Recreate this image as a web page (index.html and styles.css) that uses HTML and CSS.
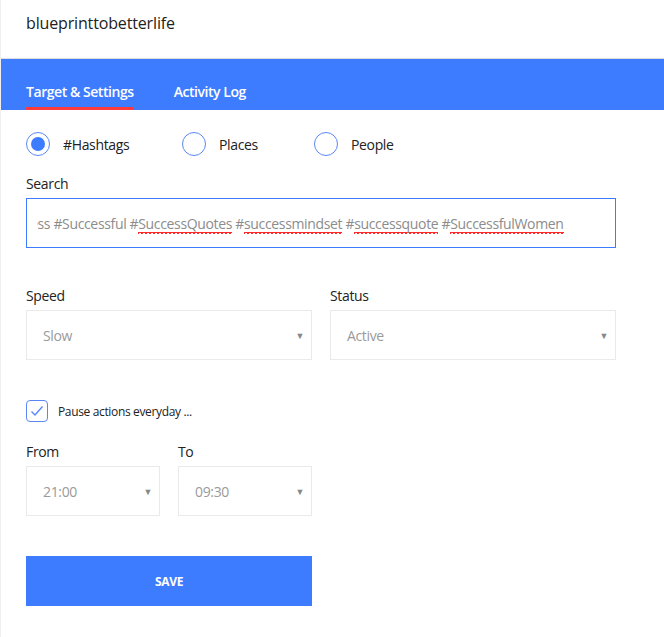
FILE: index.html
```html
<!DOCTYPE html>
<html lang="en">
<head>
    <meta charset="UTF-8">
    <meta name="viewport" content="width=device-width, initial-scale=1.0">
    <title>Target & Settings</title>
    <link rel="stylesheet" href="styles.css">
</head>
<body>
<div class="page">
    <header class="account-header">blueprinttobetterlife</header>

    <nav class="tabs">
        <span class="tab active">Target &amp; Settings</span>
        <span class="tab">Activity Log</span>
    </nav>

    <div class="settings">
        <div class="radio-row">
            <label class="radio checked"><span class="radio-dot"></span>#Hashtags</label>
            <label class="radio"><span class="radio-dot"></span>Places</label>
            <label class="radio"><span class="radio-dot"></span>People</label>
        </div>

        <div class="field">
            <div class="field-label">Search</div>
            <div class="search-box">
                <div class="search-clip">
                    <span class="search-text">#success #Successful #<span class="typo">SuccessQuotes</span> #<span class="typo">successmindset</span> #<span class="typo">successquote</span> #<span class="typo">SuccessfulWomen</span></span>
                </div>
            </div>
        </div>

        <div class="field-row">
            <div class="field wide">
                <div class="field-label">Speed</div>
                <div class="select"><span>Slow</span><span class="arrow">&#9660;</span></div>
            </div>
            <div class="field wide">
                <div class="field-label">Status</div>
                <div class="select"><span>Active</span><span class="arrow">&#9660;</span></div>
            </div>
        </div>

        <label class="checkbox">
            <span class="check-box">
                <svg width="14" height="12" viewBox="0 0 14 12">
                    <polyline points="1.5,6.5 5,10 12.5,1.5" fill="none" stroke="#5b87f5" stroke-width="1.4"/>
                </svg>
            </span>
            Pause actions everyday ...
        </label>

        <div class="field-row time-row">
            <div class="field narrow">
                <div class="field-label">From</div>
                <div class="select"><span>21:00</span><span class="arrow">&#9660;</span></div>
            </div>
            <div class="field narrow">
                <div class="field-label">To</div>
                <div class="select"><span>09:30</span><span class="arrow">&#9660;</span></div>
            </div>
        </div>

        <button type="button" class="save-button">SAVE</button>
    </div>
</div>
</body>
</html>
```

FILE: styles.css
```css
body {
    margin: 0;
    background-color: #ffffff;
    color: #222222;
    font-family: "Open Sans", sans-serif;
    letter-spacing: -0.35px;
}

.page {
    border-left: 1px solid #eeeeee;
    min-height: 637px;
    box-sizing: border-box;
}

.account-header {
    height: 59px;
    padding: 12px 25px 0;
    box-sizing: border-box;
    font-size: 16px;
    letter-spacing: -0.15px;
    border-bottom: 1px solid #dddddd;
}

.tabs {
    background-color: #3d7cff;
    height: 51px;
    padding: 0 25px;
    display: flex;
    gap: 40px;
    align-items: flex-end;
}

.tab {
    color: #ffffff;
    font-size: 14px;
    font-weight: 600;
    letter-spacing: -0.45px;
    padding-bottom: 6px;
    border-bottom: 3px solid transparent;
}

.tab.active {
    border-bottom-color: #ff3b3b;
}

.settings {
    padding: 0 25px;
    width: 590px;
}

.radio-row {
    display: flex;
    height: 24px;
    margin-top: 22px;
    align-items: center;
}

.radio {
    display: flex;
    align-items: center;
    gap: 13px;
    font-size: 14px;
}

.radio:nth-child(1) {
    width: 156px;
}

.radio:nth-child(2) {
    width: 132px;
}

.radio-dot {
    width: 24px;
    height: 24px;
    box-sizing: border-box;
    border: 1px solid #5b87f5;
    border-radius: 50%;
    display: flex;
    align-items: center;
    justify-content: center;
}

.radio.checked .radio-dot::after {
    content: "";
    width: 14px;
    height: 14px;
    border-radius: 50%;
    background-color: #3d7cff;
}

.field {
    display: flex;
    flex-direction: column;
}

.field-label {
    font-size: 14px;
    height: 21px;
    line-height: 21px;
    margin-bottom: 4px;
}

.settings > .field {
    margin-top: 17px;
}

.search-box {
    height: 50px;
    box-sizing: border-box;
    border: 1px solid #3d7cff;
    padding: 0 10px;
    display: flex;
    align-items: center;
}

.search-clip {
    flex: 1;
    overflow: hidden;
    white-space: nowrap;
}

.search-text {
    font-size: 14px;
    color: #8c8c8c;
    margin-left: -43px;
}

/* spell-check squiggle */
.typo {
    background-image:
        linear-gradient(45deg, transparent 60%, #ff2a2a 60%, #ff2a2a 85%, transparent 85%),
        linear-gradient(135deg, transparent 15%, #ff2a2a 15%, #ff2a2a 40%, transparent 40%);
    background-size: 4px 2px;
    background-repeat: repeat-x;
    background-position: 0 100%;
    padding-bottom: 1px;
}

.field-row {
    display: flex;
    gap: 18px;
    margin-top: 37px;
}

.field.wide {
    width: 286px;
}

.field.narrow {
    width: 134px;
}

.select {
    height: 50px;
    box-sizing: border-box;
    border: 1px solid #eaeaea;
    display: flex;
    align-items: center;
    justify-content: space-between;
    padding: 0 7px 0 16px;
    font-size: 14px;
    color: #9a9a9a;
}

.arrow {
    font-size: 9px;
    color: #888888;
}

.checkbox {
    display: flex;
    align-items: center;
    gap: 10px;
    font-size: 12px;
    margin-top: 40px;
}

.check-box {
    width: 22px;
    height: 22px;
    box-sizing: border-box;
    border: 1.5px solid #5b87f5;
    border-radius: 4px;
    display: flex;
    align-items: center;
    justify-content: center;
}

.field-row.time-row {
    margin-top: 19px;
}

.save-button {
    margin-top: 40px;
    width: 286px;
    height: 50px;
    border: none;
    background-color: #3d7cff;
    color: #ffffff;
    font-family: "Open Sans", sans-serif;
    font-size: 12px;
    font-weight: 700;
    letter-spacing: -0.3px;
    cursor: pointer;
}
```
